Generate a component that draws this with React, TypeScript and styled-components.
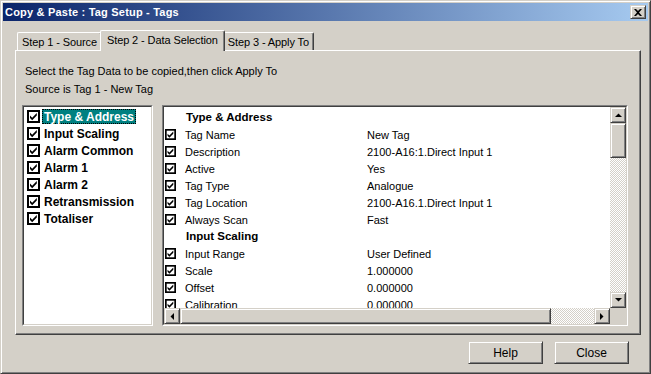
import React from "react";
import styled, { createGlobalStyle } from "styled-components";

const GlobalStyle = createGlobalStyle`
  body {
    margin: 0;
    font-family: "Liberation Sans", Arial, sans-serif;
    font-size: 11px;
    color: #000;
  }
`;

const raised = `
  border: 1px solid;
  border-color: #d4d0c8 #404040 #404040 #d4d0c8;
  box-shadow: inset 1px 1px 0 #fff, inset -1px -1px 0 #808080;
  background: #d4d0c8;
  box-sizing: border-box;
`;

const Window = styled.div`
  width: 651px;
  height: 374px;
  box-sizing: border-box;
  padding: 2px;
  display: flex;
  flex-direction: column;
  ${raised}
`;

const TitleBar = styled.div`
  height: 18px;
  display: flex;
  align-items: center;
  justify-content: space-between;
  padding: 0 2px 0 2px;
  background: linear-gradient(to right, #0a246a, #a6caf0);
`;

const TitleText = styled.span`
  color: #fff;
  font-weight: bold;
  font-size: 11px;
  letter-spacing: 0.2px;
`;

const CloseBox = styled.div`
  ${raised}
  width: 16px;
  height: 14px;
  display: flex;
  align-items: center;
  justify-content: center;
`;

const TabStrip = styled.div`
  display: flex;
  align-items: flex-end;
  height: 20px;
  margin: 9px 7px 0 12px;
  padding-left: 2px;
`;

const Tab = styled.div<{ $active?: boolean }>`
  position: relative;
  box-sizing: border-box;
  height: ${(p) => (p.$active ? 21 : 18)}px;
  margin: 0 ${(p) => (p.$active ? -2 : 0)}px ${(p) => (p.$active ? -1 : 0)}px;
  padding: ${(p) => (p.$active ? "1px 6px 0" : "1px 4px 0")};
  display: flex;
  align-items: ${(p) => (p.$active ? "flex-start" : "center")};
  line-height: 16px;
  letter-spacing: -0.1px;
  background: #d4d0c8;
  border-top: 1px solid #fff;
  border-left: 1px solid #fff;
  border-right: 1px solid #404040;
  border-radius: 2px 2px 0 0;
  box-shadow: inset -1px 0 0 #808080;
  z-index: ${(p) => (p.$active ? 2 : 1)};
`;

const Panel = styled.div`
  height: 285px;
  margin: 0 7px 0 12px;
  box-sizing: border-box;
  border: 1px solid;
  border-color: #fff #404040 #404040 #fff;
  box-shadow: inset -1px -1px 0 #808080;
  padding: 11px 0 0 6px;
  display: flex;
  flex-direction: column;
`;

const Instruction = styled.div`
  line-height: 18px;
  margin-left: 3px;
`;

const ListsRow = styled.div`
  display: flex;
  gap: 9px;
  margin-top: 7px;
`;

const ListFrame = styled.div<{ $width: number }>`
  width: ${(p) => p.$width}px;
  height: 221px;
  box-sizing: border-box;
  border: 1px solid;
  border-color: #808080 #fff #fff #808080;
  display: flex;
`;

const ListInner = styled.div`
  flex: 1;
  border: 1px solid;
  border-color: #404040 #d4d0c8 #d4d0c8 #404040;
  background: #fff;
  overflow: hidden;
`;

const GroupList = styled.div`
  padding: 1px 0 0 3px;
`;

const GroupRow = styled.div`
  height: 17px;
  display: flex;
  align-items: center;
`;

const GroupLabel = styled.span<{ $selected?: boolean }>`
  margin-left: 2px;
  padding: 0 1px;
  height: 15px;
  line-height: 14px;
  font-weight: bold;
  font-size: 12px;
  box-sizing: border-box;
  border: 1px dotted ${(p) => (p.$selected ? "#000" : "transparent")};
  background: ${(p) => (p.$selected ? "#008080" : "transparent")};
  color: ${(p) => (p.$selected ? "#fff" : "#000")};
`;

const DetailGrid = styled.div`
  height: 100%;
  display: grid;
  grid-template-columns: 1fr 16px;
  grid-template-rows: 1fr 16px;
`;

const DetailContent = styled.div`
  overflow: hidden;
  padding-top: 2px;
`;

const DetailRow = styled.div`
  height: 17px;
  display: flex;
  align-items: center;
  padding-left: 1px;
`;

const SectionRow = styled.div`
  height: 17px;
  line-height: 17px;
  padding-left: 22px;
  font-weight: bold;
  font-size: 11.5px;
`;

const FieldName = styled.span`
  width: 182px;
  margin-left: 9px;
`;

const VScroll = styled.div`
  display: flex;
  flex-direction: column;
`;

const HScroll = styled.div`
  display: flex;
`;

const ScrollButton = styled.div`
  ${raised}
  width: 16px;
  height: 16px;
  flex: none;
  display: flex;
  align-items: center;
  justify-content: center;
`;

const Thumb = styled.div<{ $size: number; $vertical?: boolean }>`
  ${raised}
  flex: none;
  ${(p) => (p.$vertical ? `height: ${p.$size}px;` : `width: ${p.$size}px;`)}
`;

const Track = styled.div`
  flex: 1;
  background: repeating-conic-gradient(#d4d0c8 0 25%, #fff 0 50%) 0 0 / 2px 2px;
`;

const Corner = styled.div`
  background: #d4d0c8;
`;

const ButtonRow = styled.div`
  display: flex;
  justify-content: flex-end;
  gap: 11px;
  margin-top: 6px;
  padding-right: 19px;
`;

const DialogButton = styled.div`
  ${raised}
  width: 75px;
  height: 23px;
  display: flex;
  align-items: center;
  justify-content: center;
  font-size: 12px;
`;

function CheckBox({ size }: { size: number }) {
  return (
    <svg width={size} height={size} viewBox="0 0 13 13" style={{ flex: "none" }}>
      <rect x="1" y="1" width="11" height="11" fill="#fff" stroke="#000" strokeWidth="2" />
      <path d="M3 5.5 L5.2 7.7 L9.8 3.1 L9.8 5.6 L5.2 10.2 L3 8 Z" fill="#000" />
    </svg>
  );
}

function Arrow({ dir }: { dir: "up" | "down" | "left" | "right" }) {
  const points = {
    up: "0,4 7,4 3.5,0.5",
    down: "0,0 7,0 3.5,3.5",
    left: "4,0 4,7 0.5,3.5",
    right: "0,0 0,7 3.5,3.5",
  }[dir];
  const vertical = dir === "up" || dir === "down";
  return (
    <svg width={vertical ? 7 : 4} height={vertical ? 4 : 7}>
      <polygon points={points} fill="#000" />
    </svg>
  );
}

const groups = [
  "Type & Address",
  "Input Scaling",
  "Alarm Common",
  "Alarm 1",
  "Alarm 2",
  "Retransmission",
  "Totaliser",
];

type Line = { section: string } | { name: string; value: string };

const lines: Line[] = [
  { section: "Type & Address" },
  { name: "Tag Name", value: "New Tag" },
  { name: "Description", value: "2100-A16:1.Direct Input 1" },
  { name: "Active", value: "Yes" },
  { name: "Tag Type", value: "Analogue" },
  { name: "Tag Location", value: "2100-A16.1.Direct Input 1" },
  { name: "Always Scan", value: "Fast" },
  { section: "Input Scaling" },
  { name: "Input Range", value: "User Defined" },
  { name: "Scale", value: "1.000000" },
  { name: "Offset", value: "0.000000" },
  { name: "Calibration", value: "0.000000" },
];

export default function App() {
  return (
    <>
      <GlobalStyle />
      <Window>
        <TitleBar>
          <TitleText>Copy &amp; Paste : Tag Setup - Tags</TitleText>
          <CloseBox>
            <svg width="8" height="7">
              <path d="M0 0 H2 L4 2 L6 0 H8 L5 3.5 L8 7 H6 L4 5 L2 7 H0 L3 3.5 Z" fill="#000" />
            </svg>
          </CloseBox>
        </TitleBar>

        <TabStrip>
          <Tab>Step 1 - Source</Tab>
          <Tab $active>Step 2 - Data Selection</Tab>
          <Tab>Step 3 - Apply To</Tab>
        </TabStrip>

        <Panel>
          <Instruction>
            Select the Tag Data to be copied,then click Apply To
            <br />
            Source is Tag 1 - New Tag
          </Instruction>

          <ListsRow>
            <ListFrame $width={131}>
              <ListInner>
                <GroupList>
                  {groups.map((g, i) => (
                    <GroupRow key={g}>
                      <CheckBox size={13} />
                      <GroupLabel $selected={i === 0}>{g}</GroupLabel>
                    </GroupRow>
                  ))}
                </GroupList>
              </ListInner>
            </ListFrame>

            <ListFrame $width={466}>
              <ListInner>
                <DetailGrid>
                  <DetailContent>
                    {lines.map((l, i) =>
                      "section" in l ? (
                        <SectionRow key={i}>{l.section}</SectionRow>
                      ) : (
                        <DetailRow key={i}>
                          <CheckBox size={11} />
                          <FieldName>{l.name}</FieldName>
                          <span>{l.value}</span>
                        </DetailRow>
                      )
                    )}
                  </DetailContent>
                  <VScroll>
                    <ScrollButton>
                      <Arrow dir="up" />
                    </ScrollButton>
                    <Thumb $vertical $size={35} />
                    <Track />
                    <ScrollButton>
                      <Arrow dir="down" />
                    </ScrollButton>
                  </VScroll>
                  <HScroll>
                    <ScrollButton>
                      <Arrow dir="left" />
                    </ScrollButton>
                    <Thumb $size={371} />
                    <Track />
                    <ScrollButton>
                      <Arrow dir="right" />
                    </ScrollButton>
                  </HScroll>
                  <Corner />
                </DetailGrid>
              </ListInner>
            </ListFrame>
          </ListsRow>
        </Panel>

        <ButtonRow>
          <DialogButton>Help</DialogButton>
          <DialogButton>Close</DialogButton>
        </ButtonRow>
      </Window>
    </>
  );
}
